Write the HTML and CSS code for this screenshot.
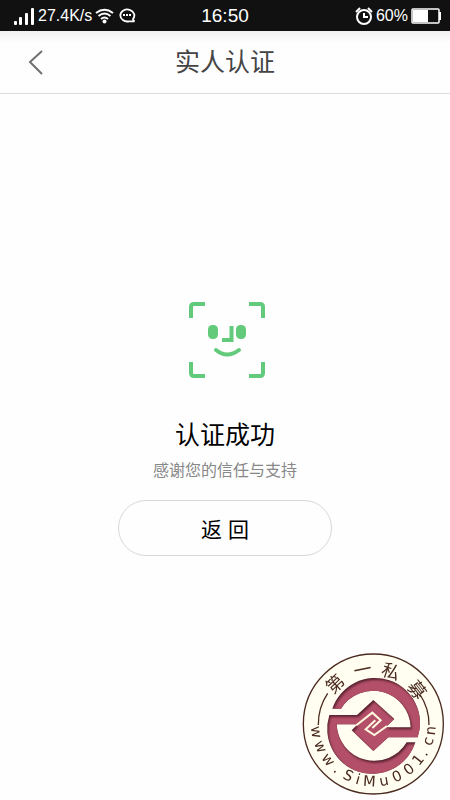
FILE: index.html
```html
<!DOCTYPE html>
<html lang="zh-CN">
<head>
    <meta charset="UTF-8">
    <meta name="viewport" content="width=device-width, initial-scale=1.0">
    <title>实人认证</title>
    <link rel="stylesheet" href="styles.css">
</head>
<body>
    <div class="status-bar">
        <div class="status-left">
            <svg width="21" height="18" viewBox="0 0 21 18" fill="#fff">
                <rect x="0" y="14" width="3" height="4" rx="1"/>
                <rect x="5" y="10" width="3" height="8" rx="1"/>
                <rect x="11" y="6" width="3" height="12" rx="1"/>
                <rect x="17" y="1" width="3" height="17" rx="1"/>
            </svg>
            <span>27.4K/s</span>
            <svg width="19" height="16" viewBox="0 0 19 16" fill="none" stroke="#fff" stroke-width="2">
                <path d="M1 5Q9.500-1.500 18 5M3.500 8Q9.500 3 15.500 8M6 11Q9.500 8 13 11"/>
                <circle cx="9.500" cy="13.500" r="2" fill="#fff" stroke="none"/>
            </svg>
            <svg class="icon-chat" width="17" height="15" viewBox="0 0 17 15" fill="none" stroke="#fff" stroke-width="1.800">
                <path d="M14 11A7 6 0 1 0 10 13.300H15.500Q14 12.500 14 11Z"/>
                <path d="M4 7h2M7 7h2M10 7h2" stroke-width="2"/>
            </svg>
        </div>
        <div class="clock">16:50</div>
        <div class="status-right">
            <svg width="18" height="18" viewBox="0 0 18 18" fill="none" stroke="#fff" stroke-width="2">
                <circle cx="9" cy="10" r="7"/>
                <path d="M9 6v4h4M1 5L5 1M13 1l4 4"/>
            </svg>
            <span>60%</span>
            <svg width="31" height="16" viewBox="0 0 31 16">
                <rect x="1" y="1" width="27" height="14" rx="1" fill="none" stroke="#fff" stroke-width="1.500"/>
                <rect x="2" y="2" width="15" height="12" fill="#fff"/>
                <path d="M29 4v8" stroke="#fff" stroke-width="2"/>
            </svg>
        </div>
    </div>

    <header class="nav">
        <button class="back" type="button" aria-label="返回">
            <svg width="16" height="26" viewBox="0 0 16 26" fill="none" stroke="#707070" stroke-width="2">
                <path d="M14 2L2 13L14 25"/>
            </svg>
        </button>
        <h1>实人认证</h1>
    </header>

    <main class="result">
        <svg width="78" height="78" viewBox="0 0 78 78" fill="none" stroke="#63ca7b" stroke-width="4">
            <path d="M3 17V6Q3 3 6 3H17M61 3H72Q75 3 75 6V17M75 61V72Q75 75 72 75H61M17 75H6Q3 75 3 72V61"/>
            <path d="M43.500 25V39H34"/>
            <path d="M28 49Q39 58 51 49" stroke-linecap="round"/>
            <rect x="20" y="24" width="10" height="14" rx="4.500" fill="#63ca7b" stroke="none"/>
            <rect x="48" y="24" width="10" height="14" rx="4.500" fill="#63ca7b" stroke="none"/>
        </svg>
        <h2>认证成功</h2>
        <p>感谢您的信任与支持</p>
        <button class="return" type="button">返 回</button>
    </main>

    <!-- 水印 -->
    <svg class="watermark" width="155" height="155" viewBox="0 0 465 465">
        <defs>
            <path id="arc-top" d="M88 237A147 147 0 0 1 382 237"/>
            <path id="arc-bottom" d="M48 237A187 187 0 0 0 422 237"/>
            <path id="emblem" d="M112 191A135 135 0 0 1 368 277H280L235 318L170 256L188 238H125A113 113 0 0 0 335 292H361A135 135 0 0 1 103 210H186L235 165L298 222L272 247H347A113 113 0 0 0 138 191Z"/>
            <clipPath id="emblem-clip"><use href="#emblem"/></clipPath>
            <filter id="soft"><feGaussianBlur stdDeviation="3"/></filter>
        </defs>
        <circle cx="235" cy="237" r="210" fill="#fffef0" stroke="#4b2b20" stroke-width="4"/>
        <path d="M70 240A165 165 0 0 1 98 145M374 147A165 165 0 0 1 402 240" fill="none" stroke="#4b2b20" stroke-width="4"/>
        <use href="#emblem" fill="#5a2230"/>
        <g clip-path="url(#emblem-clip)">
            <use href="#emblem" x="4" y="6" fill="#b34f68" filter="url(#soft)"/>
        </g>
        <path d="M184 241L232 203L257 226L232 249M241 226L212 253L238 270L276 243" fill="none" stroke="#fffbe0" stroke-width="6"/>
        <g class="seal-text">
            <text class="seal-name" x="119 202 278 364"><textPath href="#arc-top">第一私募</textPath></text>
            <text class="seal-url" x="26 76 125 167 209 243 281 328 373 418 461 490 530 566"><textPath href="#arc-bottom">www.SiMu001.cn</textPath></text>
        </g>
    </svg>
</body>
</html>
```
FILE: styles.css
```css
* {
    box-sizing: border-box;
}

body {
    margin: 0;
    min-height: 100vh;
    background: #fefefe;
    color: #000;
    font-family: "Liberation Sans", "Noto Sans CJK SC", sans-serif;
}

button {
    background: none;
    border: none;
    padding: 0;
    font: inherit;
    color: inherit;
    cursor: pointer;
}

.status-bar {
    display: grid;
    grid-template-columns: 1fr auto 1fr;
    align-items: center;
    height: 31px;
    padding: 0 8px;
    background: #111;
    color: #fff;
    font-size: 16px;
}

.status-left,
.status-right {
    display: flex;
    align-items: center;
    gap: 3px;
}

.status-left {
    padding-left: 6px;
}

.status-right {
    justify-content: flex-end;
}

.icon-chat {
    margin-left: 2px;
}

.clock {
    font-size: 19px;
}

.nav {
    display: grid;
    grid-template-columns: 48px 1fr 48px;
    align-items: center;
    height: 63px;
    border-bottom: 1px solid #ddd;
    background: linear-gradient(#f0f0f0, #fefefe 12px);
}

.back {
    display: flex;
    justify-content: flex-end;
    padding: 8px 4px;
}

h1 {
    margin: 0;
    font-size: 25px;
    line-height: 36px;
    font-weight: 400;
    text-align: center;
    color: #444;
}

.result {
    display: flex;
    flex-direction: column;
    align-items: center;
    padding: 207px 24px 24px;
}

.result svg {
    margin-left: 4px;
}

h2 {
    margin: 38px 0 0;
    font-size: 25px;
    line-height: 36px;
    font-weight: 400;
}

.result p {
    margin: 6px 0 17px;
    font-size: 16px;
    line-height: 24px;
    color: #888;
}

.return {
    width: 214px;
    height: 56px;
    border: 1px solid #d8d8d8;
    border-radius: 28px;
    font-size: 21px;
}

.watermark {
    position: fixed;
    right: 0;
    bottom: 0;
}

.seal-text {
    fill: #4b2b20;
    text-anchor: middle;
}

.seal-name {
    font-family: "Noto Sans CJK SC", sans-serif;
    font-size: 54px;
}

.seal-url {
    font-family: "DejaVu Sans", sans-serif;
    font-size: 44px;
}
```
